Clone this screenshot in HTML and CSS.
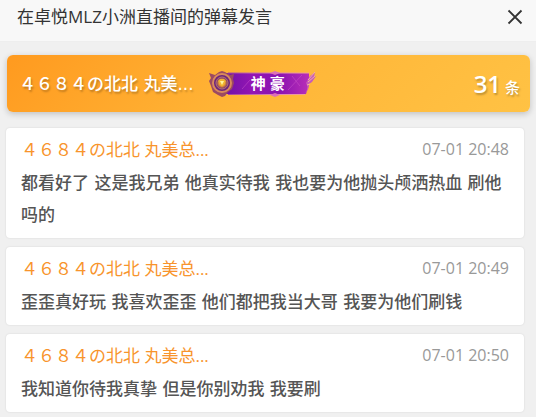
FILE: index.html
```html
<!DOCTYPE html>
<html lang="zh-CN">

<head>
    <meta charset="UTF-8">
    <meta name="viewport" content="width=device-width, initial-scale=1">
    <title>弹幕发言</title>
    <link rel="stylesheet" href="styles.css">
</head>

<body>
    <header class="dialog-header">
        <h1 class="dialog-title">在卓悦MLZ小洲直播间的弹幕发言</h1>
        <button class="close" type="button" aria-label="关闭">
            <svg width="16" height="16" viewBox="0 0 16 16" fill="none" stroke="#333" stroke-width="1.8">
                <path d="M1.5 1.5 14.5 14.5M14.5 1.5 1.5 14.5" />
            </svg>
        </button>
    </header>

    <main class="dialog-body">
        <section class="banner">
            <span class="banner-name">４６８４の北北 丸美...</span>
            <span class="badge">
                <!-- Marco de la insignia -->
                <svg class="badge-bg" viewBox="0 0 108 28" aria-hidden="true">
                    <defs>
                        <linearGradient id="ribbon" x1="0" x2="1" y1="0" y2="0">
                            <stop offset="0" stop-color="#6d12a6" />
                            <stop offset=".35" stop-color="#9415b4" />
                            <stop offset=".65" stop-color="#8a12b0" />
                            <stop offset="1" stop-color="#b82fb8" />
                        </linearGradient>
                        <linearGradient id="edge" x1="0" x2="1" y1="0" y2="0">
                            <stop offset="0" stop-color="#a8489c" />
                            <stop offset=".6" stop-color="#e08ab8" />
                            <stop offset="1" stop-color="#f3a58c" />
                        </linearGradient>
                        <radialGradient id="gem">
                            <stop offset="0" stop-color="#fff28a" />
                            <stop offset=".5" stop-color="#e89a2c" />
                            <stop offset="1" stop-color="#6a2480" />
                        </radialGradient>
                    </defs>
                    <path d="M14 3H101V14L98 24H14Z" fill="url(#ribbon)" />
                    <path d="M20 3H101M20 24.5H97" stroke="url(#edge)" fill="none" />
                    <path d="M62 3l5-2 5 2-5 2ZM62 25l5-2 5 2-5 2Z" fill="#dc70b8" />
                    <path d="M34 19l8-9M84 6l8 10M94 5l-14 15" stroke="#d25bd0" opacity=".45" />
                    <path d="M97 23c3-3 3-7 1-10l4-7 5-4-1 5 2-1-4 6-3 2c0 4-1 7-4 9Z" fill="#c65abb" />
                    <path d="M107 2l-7 8M107 6l-7 6M99 15l3-1" stroke="#f6ae9c" fill="none" />
                    <!-- Medallón -->
                    <path d="M1 3l6 2 4-3 3-1 3 1 5 3 4-1-1 5 1 4-2 6-4 3-3 4-3 1-4-2-5-3-2-6-2-5 2-3Z" fill="#9c4a62" />
                    <circle cx="14" cy="13" r="9" fill="#6c237c" stroke="#d98a5b" stroke-width="2" />
                    <circle cx="14" cy="13" r="6" fill="url(#gem)" stroke="#b87870" />
                    <path d="M10 11l2-2h4l2 2-4 6Z" fill="#f0b52e" />
                    <path d="M12 11h4l-2 4Z" fill="#fff5a0" />
                </svg>
                <span class="badge-text">神豪</span>
            </span>
            <span class="banner-count"><strong>31</strong> 条</span>
        </section>

        <ul class="messages">
            <li class="message">
                <div class="message-head">
                    <a class="message-name" href="#">４６８４の北北 丸美总...</a>
                    <time class="message-time">07-01 20:48</time>
                </div>
                <p class="message-text">都看好了 这是我兄弟 他真实待我 我也要为他抛头颅洒热血 刷他吗的</p>
            </li>
            <li class="message">
                <div class="message-head">
                    <a class="message-name" href="#">４６８４の北北 丸美总...</a>
                    <time class="message-time">07-01 20:49</time>
                </div>
                <p class="message-text">歪歪真好玩 我喜欢歪歪 他们都把我当大哥 我要为他们刷钱</p>
            </li>
            <li class="message">
                <div class="message-head">
                    <a class="message-name" href="#">４６８４の北北 丸美总...</a>
                    <time class="message-time">07-01 20:50</time>
                </div>
                <p class="message-text">我知道你待我真挚 但是你别劝我 我要刷</p>
            </li>
        </ul>
    </main>
</body>

</html>
```
FILE: styles.css
```css
* {
    margin: 0;
    padding: 0;
    box-sizing: border-box;
}

body {
    font-family: "Open Sans", "Noto Sans CJK SC", sans-serif;
    font-size: 17px;
    color: #555;
    background: #f0f0f0;
}

/* Encabezado */
.dialog-header {
    display: flex;
    align-items: center;
    justify-content: space-between;
    height: 42px;
    padding: 0 13px 8px 17px;
    background: #f8f8f8;
    border-bottom: 1px solid #eee;
}

.dialog-title {
    font-size: 17px;
    font-weight: 400;
    line-height: 32px;
    color: #333;
}

.close {
    display: flex;
    border: 0;
    background: none;
    cursor: pointer;
}

.dialog-body {
    padding: 13px 6px 4px;
}

/* Franja naranja con el total */
.banner {
    display: flex;
    align-items: center;
    height: 57px;
    padding: 0 10px 0 12px;
    margin-left: 1px;
    border-radius: 6px;
    background: linear-gradient(135deg, #ff9a1f, #ffb638 50%, #ffc244);
    box-shadow: 0 2px 6px rgba(0, 0, 0, 0.2);
    color: #fff;
    text-shadow: 1px 2px 2px rgba(0, 0, 0, 0.25);
}

.banner-name {
    font-family: "DejaVu Sans", "Noto Sans CJK SC", sans-serif;
    font-weight: 500;
    line-height: 26px;
    white-space: nowrap;
}

.badge {
    position: relative;
    flex: none;
    width: 108px;
    height: 28px;
    margin-left: 14px;
}

.badge-bg {
    display: block;
    width: 100%;
}

/* Texto encima de la insignia */
.badge-text {
    position: absolute;
    top: 0;
    left: 43px;
    font-size: 15px;
    font-weight: 700;
    line-height: 27px;
    letter-spacing: 4px;
    text-shadow: none;
}

.banner-count {
    margin-left: auto;
    font-size: 15px;
    font-weight: 500;
    white-space: nowrap;
}

.banner-count strong {
    font-size: 24px;
    font-weight: 600;
}

/* Lista de mensajes */
.messages {
    display: flex;
    flex-direction: column;
    gap: 9px;
    margin: 16px 6px 0 0;
    list-style: none;
}

.message {
    padding: 9px 15px 7px;
    border-radius: 4px;
    background: #fff;
    box-shadow: 0 0 2px rgba(0, 0, 0, 0.12);
}

.message-head {
    display: flex;
    justify-content: space-between;
    margin-bottom: 4px;
    line-height: 26px;
}

.message-name {
    color: #f8942c;
    text-decoration: none;
}

.message-time {
    font-size: 16px;
    line-height: 24px;
    color: #999;
}

.message-text {
    font-family: "DejaVu Sans", "Noto Sans CJK SC", sans-serif;
    font-weight: 500;
    line-height: 32px;
}
```
